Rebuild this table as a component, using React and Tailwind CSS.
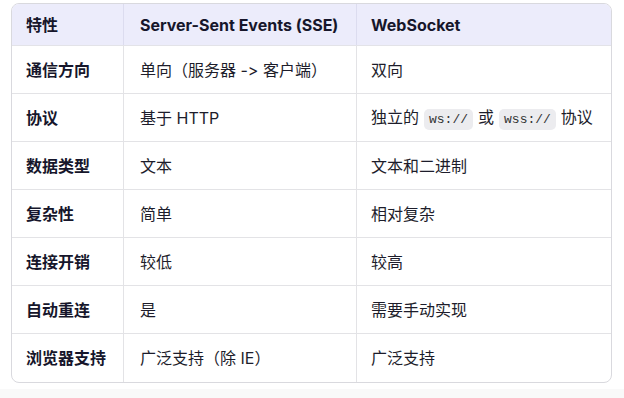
const rows = [
  { k: "通信方向", a: "单向（服务器 -> 客户端）", b: "双向" },
  { k: "协议", a: "基于 HTTP", b: "code" },
  { k: "数据类型", a: "文本", b: "文本和二进制" },
  { k: "复杂性", a: "简单", b: "相对复杂" },
  { k: "连接开销", a: "较低", b: "较高" },
  { k: "自动重连", a: "是", b: "需要手动实现" },
  { k: "浏览器支持", a: "广泛支持（除 IE）", b: "广泛支持" },
];

const Code = ({ children }) => (
  <code className="mx-[5px] rounded-[5px] bg-[#ececef] px-[5px] py-[3px] font-['Liberation_Mono',monospace] text-[13px] text-[#333]">
    {children}
  </code>
);

export default function App() {
  return (
    <div className="min-h-[398px] bg-white font-['Inter','Noto_Sans_CJK_SC',sans-serif] [font-feature-settings:'liga'_0,'calt'_0]">
      <div className="pt-[3px] pl-[11px]">
        <div className="w-[601px] overflow-hidden rounded-[8px] border border-[#d9d9de]">
          <div className="grid h-[42px] grid-cols-[112px_233px_1fr] border-b border-[#e3e3e8] bg-[#ececfb] text-[16px] font-bold text-[#16162b]">
            <div className="flex items-center border-r border-[#dcdcef] px-[14px]">特性</div>
            <div className="flex items-center border-r border-[#dcdcef] px-[16px]">Server-Sent Events (SSE)</div>
            <div className="flex items-center px-[14px]">WebSocket</div>
          </div>
          {rows.map((r, i) => (
            <div
              key={r.k}
              className={
                "grid h-[48px] grid-cols-[112px_233px_1fr] text-[16px] text-[#1d1d2b] " +
                (i < rows.length - 1 ? "border-b border-[#e3e3e6]" : "")
              }
            >
              <div className="flex items-center border-r border-[#e3e3e6] px-[14px] font-bold text-[#16162b]">
                {r.k}
              </div>
              <div className="flex items-center border-r border-[#e3e3e6] px-[16px]">{r.a}</div>
              <div className="flex items-center px-[14px]">
                {r.b === "code" ? (
                  <span>
                    独立的<Code>ws://</Code>或<Code>wss://</Code>协议
                  </span>
                ) : (
                  r.b
                )}
              </div>
            </div>
          ))}
        </div>
      </div>
      <div className="mt-[6px] h-[11px] bg-[#f9f9f9]" />
    </div>
  );
}
